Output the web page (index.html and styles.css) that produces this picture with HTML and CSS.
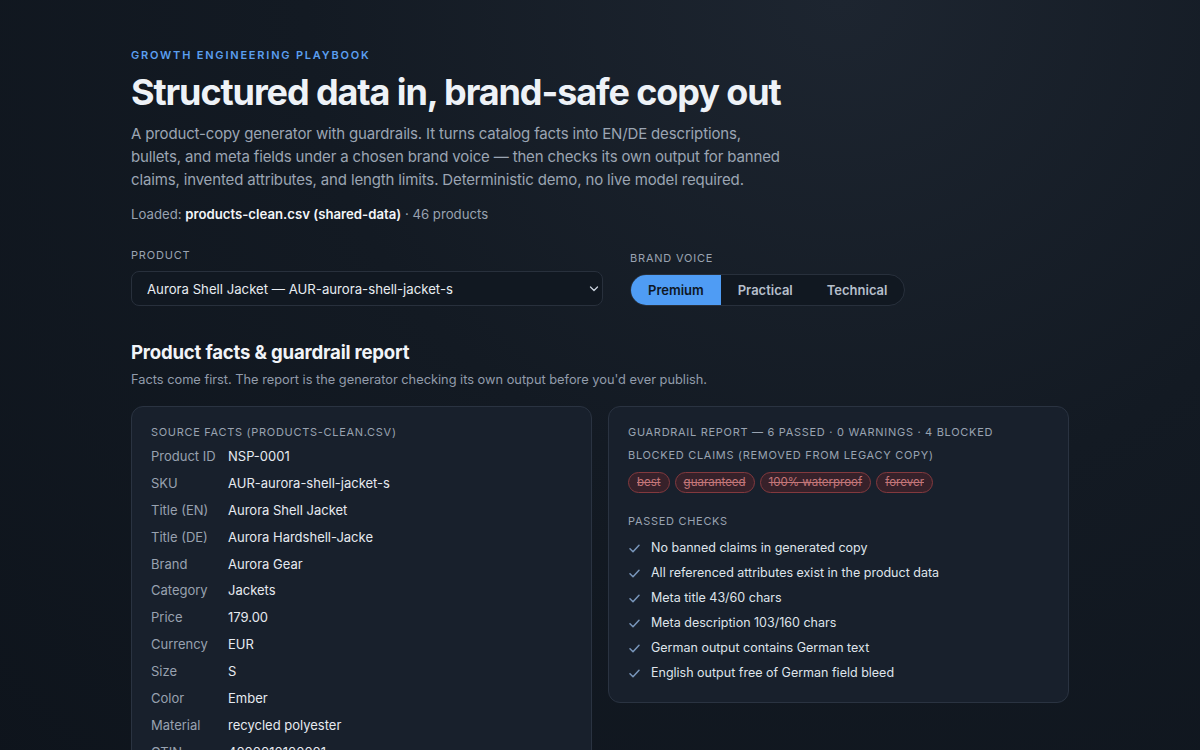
FILE: index.html
```html
<!DOCTYPE html>
<html lang="en">
<head>
    <meta charset="UTF-8">
    <meta name="viewport" content="width=device-width, initial-scale=1.0">
    <title>Product copy generator</title>
    <link rel="stylesheet" href="styles.css">
</head>
<body>
    <main class="page">
        <header class="intro">
            <p class="eyebrow">Growth engineering playbook</p>
            <h1>Structured data in, brand-safe copy out</h1>
            <p class="lead">A product-copy generator with guardrails. It turns catalog facts into EN/DE descriptions, bullets, and meta fields under a chosen brand voice — then checks its own output for banned claims, invented attributes, and length limits. Deterministic demo, no live model required.</p>
            <p class="loaded">Loaded: <strong>products-clean.csv (shared-data)</strong> · 46 products</p>
        </header>

        <section class="controls">
            <div class="field product-field">
                <label class="field-label" for="product">Product</label>
                <div class="select-wrap">
                    <select id="product" class="select">
                        <option>Aurora Shell Jacket — AUR-aurora-shell-jacket-s</option>
                    </select>
                    <svg class="chevron" width="10" height="6" viewBox="0 0 10 6"><polyline points="1.5,1 5,4.5 8.5,1" fill="none" stroke="#c9d1dc" stroke-width="1.3" stroke-linecap="round" stroke-linejoin="round"/></svg>
                </div>
            </div>
            <div class="field">
                <span class="field-label">Brand voice</span>
                <div class="segmented">
                    <button class="seg active">Premium</button>
                    <button class="seg">Practical</button>
                    <button class="seg">Technical</button>
                </div>
            </div>
        </section>

        <section class="report">
            <h2>Product facts &amp; guardrail report</h2>
            <p class="sub">Facts come first. The report is the generator checking its own output before you'd ever publish.</p>

            <div class="cards">
                <div class="card">
                    <p class="card-label">Source facts (products-clean.csv)</p>
                    <dl class="facts">
                        <dt>Product ID</dt><dd>NSP-0001</dd>
                        <dt>SKU</dt><dd>AUR-aurora-shell-jacket-s</dd>
                        <dt>Title (EN)</dt><dd>Aurora Shell Jacket</dd>
                        <dt>Title (DE)</dt><dd>Aurora Hardshell-Jacke</dd>
                        <dt>Brand</dt><dd>Aurora Gear</dd>
                        <dt>Category</dt><dd>Jackets</dd>
                        <dt>Price</dt><dd>179.00</dd>
                        <dt>Currency</dt><dd>EUR</dd>
                        <dt>Size</dt><dd>S</dd>
                        <dt>Color</dt><dd>Ember</dd>
                        <dt>Material</dt><dd>recycled polyester</dd>
                        <dt>GTIN</dt><dd>4000010100001</dd>
                    </dl>
                </div>

                <div class="card guard">
                    <p class="card-label">Guardrail report — 6 passed · 0 warnings · 4 blocked</p>
                    <p class="card-label">Blocked claims (removed from legacy copy)</p>
                    <div class="pills">
                        <span class="pill">best</span>
                        <span class="pill">guaranteed</span>
                        <span class="pill">100% waterproof</span>
                        <span class="pill">forever</span>
                    </div>
                    <p class="card-label passed-label">Passed checks</p>
                    <ul class="checks">
                        <li><svg class="tick" width="11" height="9" viewBox="0 0 11 9"><polyline points="1,4.8 4,7.8 10,1.2" fill="none" stroke="#7895ba" stroke-width="1.5" stroke-linecap="round" stroke-linejoin="round"/></svg>No banned claims in generated copy</li>
                        <li><svg class="tick" width="11" height="9" viewBox="0 0 11 9"><polyline points="1,4.8 4,7.8 10,1.2" fill="none" stroke="#7895ba" stroke-width="1.5" stroke-linecap="round" stroke-linejoin="round"/></svg>All referenced attributes exist in the product data</li>
                        <li><svg class="tick" width="11" height="9" viewBox="0 0 11 9"><polyline points="1,4.8 4,7.8 10,1.2" fill="none" stroke="#7895ba" stroke-width="1.5" stroke-linecap="round" stroke-linejoin="round"/></svg>Meta title 43/60 chars</li>
                        <li><svg class="tick" width="11" height="9" viewBox="0 0 11 9"><polyline points="1,4.8 4,7.8 10,1.2" fill="none" stroke="#7895ba" stroke-width="1.5" stroke-linecap="round" stroke-linejoin="round"/></svg>Meta description 103/160 chars</li>
                        <li><svg class="tick" width="11" height="9" viewBox="0 0 11 9"><polyline points="1,4.8 4,7.8 10,1.2" fill="none" stroke="#7895ba" stroke-width="1.5" stroke-linecap="round" stroke-linejoin="round"/></svg>German output contains German text</li>
                        <li><svg class="tick" width="11" height="9" viewBox="0 0 11 9"><polyline points="1,4.8 4,7.8 10,1.2" fill="none" stroke="#7895ba" stroke-width="1.5" stroke-linecap="round" stroke-linejoin="round"/></svg>English output free of German field bleed</li>
                    </ul>
                </div>
            </div>
        </section>
    </main>
</body>
</html>
```

FILE: styles.css
```css
*{
    margin: 0;
    padding: 0;
    box-sizing: border-box;
}
body{
    font-family: Inter, "Noto Sans", sans-serif;
    color: #e5e9f0;
    background: radial-gradient(ellipse at 70% 0%, #1d2530 0%, #131a23 45%, #0e141c 100%);
    background-color: #0f151d;
    min-height: 100vh;
}
.page{
    max-width: 938px;
    margin: 0 auto;
    padding-top: 47px;
}

/* header */
.eyebrow{
    font-size: 11px;
    font-weight: 600;
    letter-spacing: 1.8px;
    text-transform: uppercase;
    color: #5b9ff0;
    line-height: 16px;
}
h1{
    margin-top: 7px;
    font-size: 36px;
    line-height: 44px;
    font-weight: 700;
    letter-spacing: -1.1px;
    color: #eef2f7;
}
.lead{
    margin-top: 8px;
    max-width: 660px;
    font-size: 15px;
    line-height: 23px;
    letter-spacing: -0.15px;
    color: #9ba5b3;
}
.loaded{
    margin-top: 13px;
    font-size: 13.2px;
    line-height: 20px;
    color: #98a2b0;
}
.loaded strong{
    color: #f3f5f8;
    font-weight: 600;
}

/* product + voice pickers */
.controls{
    display: flex;
    align-items: flex-end;
    gap: 27px;
    margin-top: 23px;
}
.product-field{
    width: 472px;
}
.field-label{
    display: block;
    font-size: 11px;
    letter-spacing: 0.8px;
    text-transform: uppercase;
    color: #9aa3b1;
    line-height: 16px;
    margin-bottom: 8px;
}
.select-wrap{
    position: relative;
}
.select{
    appearance: none;
    width: 100%;
    height: 35px;
    padding: 0 30px 0 15px;
    font-family: inherit;
    font-size: 13.2px;
    color: #e8ecf1;
    background: #111821;
    border: 1px solid #28303c;
    border-radius: 8px;
    outline: 0;
}
.chevron{
    position: absolute;
    right: 4px;
    top: 15px;
}
.segmented{
    display: flex;
    height: 32px;
    border: 1px solid #28303c;
    border-radius: 16px;
    background: #111821;
    overflow: hidden;
}
.seg{
    border: 0;
    background: transparent;
    font-family: inherit;
    font-size: 13px;
    font-weight: 600;
    color: #b6bfcb;
    padding: 0 17px;
}
.seg.active{
    background: #4f9cf4;
    color: #0e1724;
}

/* report */
.report{
    margin-top: 33px;
}
h2{
    font-size: 18.6px;
    line-height: 26px;
    font-weight: 700;
    letter-spacing: -0.2px;
    color: #f1f4f8;
}
.sub{
    margin-top: 5px;
    font-size: 12.8px;
    line-height: 20px;
    color: #929cab;
}
.cards{
    display: grid;
    grid-template-columns: 1fr 1fr;
    gap: 16px;
    align-items: start;
    margin-top: 16px;
}
.card{
    background: #18202c;
    border: 1px solid #2a3341;
    border-radius: 12px;
    padding: 17px 19px 19px;
}
.card-label{
    font-size: 11px;
    letter-spacing: 0.7px;
    text-transform: uppercase;
    color: #99a3b1;
    line-height: 16px;
}
.card-label + .card-label{
    margin-top: 7px;
}
.facts{
    display: grid;
    grid-template-columns: 77px 1fr;
    row-gap: 6.9px;
    margin-top: 6px;
    font-size: 13px;
    line-height: 20px;
}
.facts dt{
    color: #98a2b0;
}
.facts dd{
    color: #e6eaf0;
}

.pills{
    display: flex;
    gap: 5px;
    margin-top: 9px;
}
.pill{
    font-size: 11.5px;
    line-height: 19px;
    padding: 0 8px;
    border-radius: 11px;
    border: 1px solid #83393e;
    background: #37212a;
    color: #c47679;
    text-decoration: line-through;
}
.passed-label{
    margin-top: 20px;
}
.checks{
    list-style: none;
    padding-top: 4px;
}
.checks li{
    display: flex;
    align-items: center;
    font-size: 12.5px;
    line-height: 20px;
    color: #dfe4eb;
    margin-top: 5px;
}
.tick{
    margin: 0 11px 0 1px;
    flex-shrink: 0;
}
```
